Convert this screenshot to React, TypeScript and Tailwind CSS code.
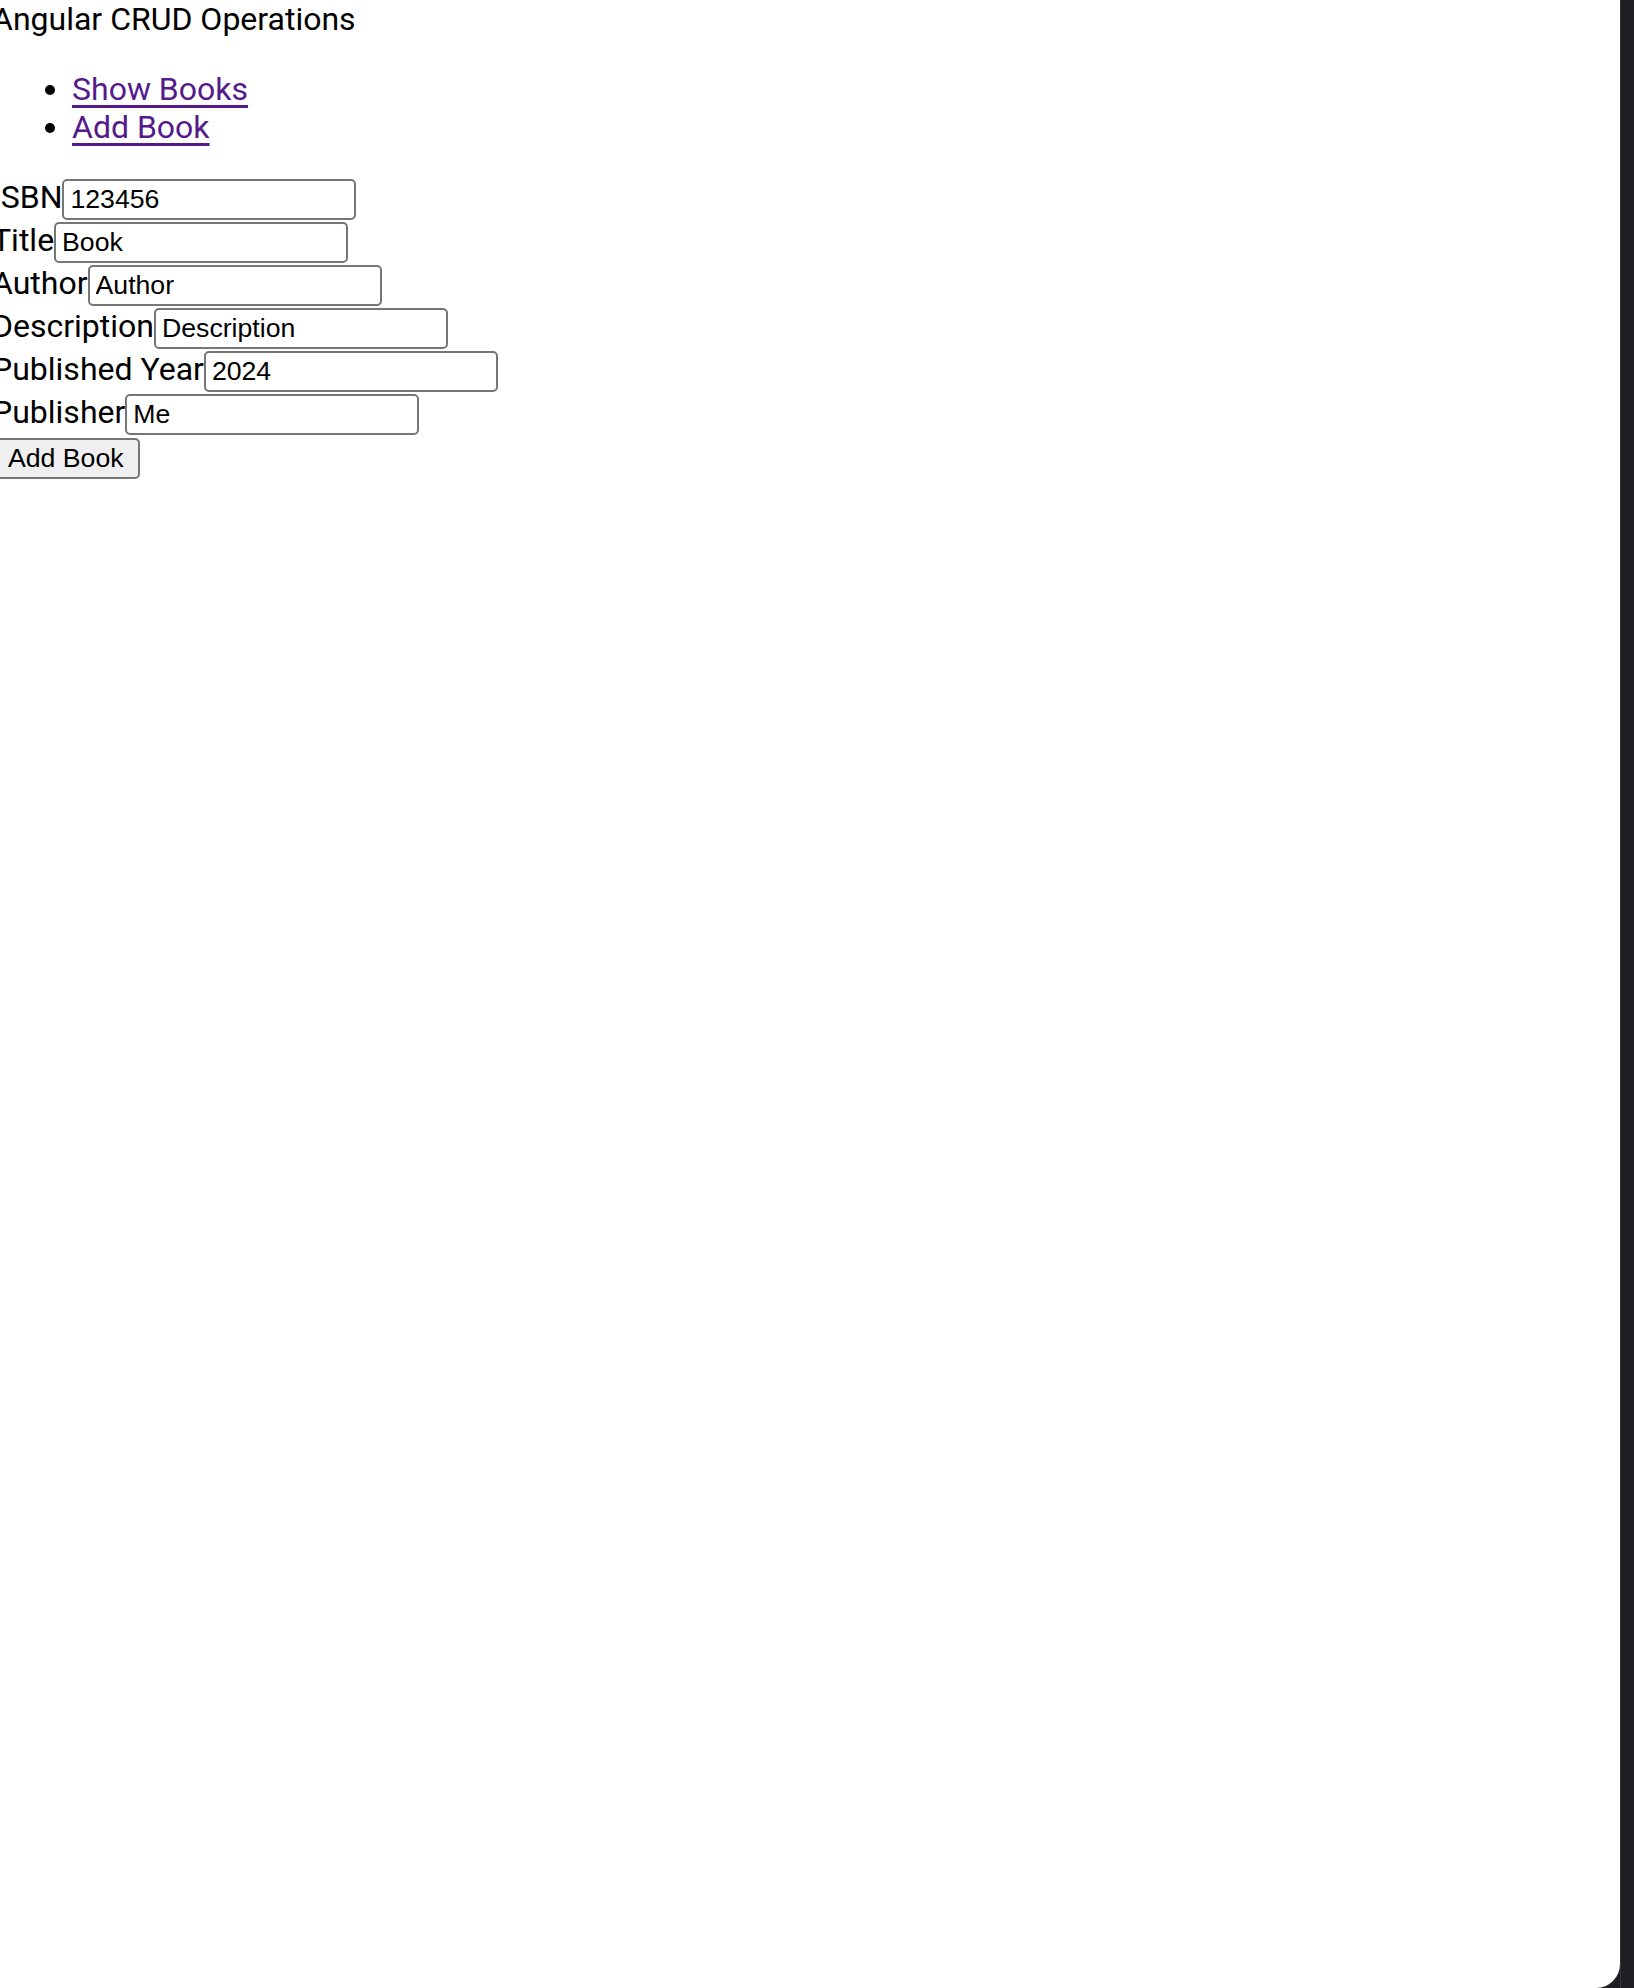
import React from "react";

const fields: { label: string; value: string }[] = [
  { label: "ISBN", value: "123456" },
  { label: "Title", value: "Book" },
  { label: "Author", value: "Author" },
  { label: "Description", value: "Description" },
  { label: "Published Year", value: "2024" },
  { label: "Publisher", value: "Me" },
];

export default function App() {
  return (
    <div className="flex h-[1988px] w-[1634px] overflow-hidden bg-[#1f1f23]">
      <div className="relative h-[1988px] w-[1620px] shrink-0 overflow-hidden rounded-br-[24px] bg-white">
        <div className="-ml-2 font-['Roboto',sans-serif] text-[32px] leading-[37.5px] text-black">
          <div className="pt-px">Angular CRUD Operations</div>
          <ul className="mt-[31px] mb-[31.5px] list-disc pl-[80px] leading-[38px]">
            <li>
              <a href="#" className="text-[#551a8b] underline decoration-[2.5px] underline-offset-[5px]">
                Show Books
              </a>
            </li>
            <li>
              <a href="#" className="text-[#551a8b] underline decoration-[2.5px] underline-offset-[5px]">
                Add Book
              </a>
            </li>
          </ul>
          <form onSubmit={(e) => e.preventDefault()}>
            {fields.map((f) => (
              <div key={f.label} className="flex h-[43px] items-baseline pt-[2px]">
                <label className="whitespace-nowrap">{f.label}</label>
                <input
                  type="text"
                  defaultValue={f.value}
                  className="h-[41px] w-[294px] rounded-[5px] border-2 border-[#767676] bg-white px-[6px] py-0 font-['Liberation_Sans',Arial,sans-serif] text-[26.67px] leading-[30px] text-black outline-none"
                />
              </div>
            ))}
            <div className="pt-[2.5px]">
              <button
                type="submit"
                className="h-[41px] rounded-[5px] border-2 border-[#767676] bg-[#efefef] px-[14px] font-['Liberation_Sans',Arial,sans-serif] text-[26.67px] leading-[30px] text-black"
              >
                Add Book
              </button>
            </div>
          </form>
        </div>
      </div>
      <div className="h-[1988px] w-px bg-[#34343a]" />
    </div>
  );
}
